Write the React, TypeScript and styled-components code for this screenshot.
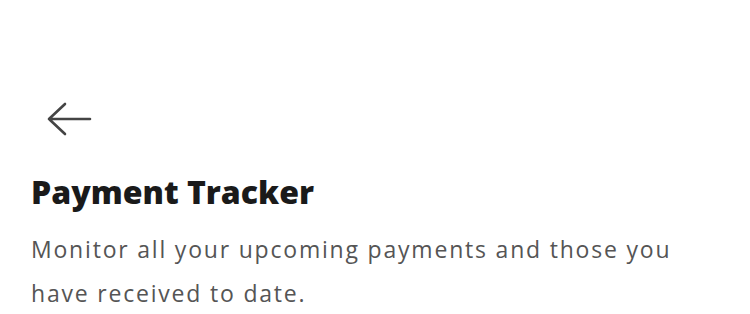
import React from 'react';
import styled, { createGlobalStyle } from 'styled-components';

const GlobalStyle = createGlobalStyle`
  html, body {
    margin: 0;
    padding: 0;
    background: #ffffff;
  }
`;

const App: React.FC = () => {
  return (
    <Page>
      <GlobalStyle />
      <BackButton aria-label="Back">
        <svg width="46" height="34" viewBox="0 0 46 34" fill="none">
          <path
            d="M44 17H3M19 2L3 17L19 32"
            stroke="#444444"
            strokeWidth="2.6"
            strokeLinecap="round"
            strokeLinejoin="round"
          />
        </svg>
      </BackButton>
      <Title>Payment Tracker</Title>
      <Description>
        Monitor all your upcoming payments and those you
        <br />
        have received to date.
      </Description>
    </Page>
  );
};

export default App;

const Page = styled.div`
  width: 750px;
  height: 314px;
  box-sizing: border-box;
  padding: 102px 0 0 31px;
  display: flex;
  flex-direction: column;
  align-items: flex-start;
  font-family: 'Open Sans', 'Noto Sans', sans-serif;
`;

const BackButton = styled.button`
  margin: 0 0 0 15px;
  padding: 0;
  border: none;
  background: none;
  display: flex;
  cursor: pointer;
`;

const Title = styled.h1`
  margin: 36px 0 0;
  font-size: 32px;
  font-weight: 800;
  line-height: 40px;
  color: #1a1a1a;
`;

const Description = styled.p`
  margin: 15px 0 0;
  font-size: 23px;
  font-weight: 400;
  letter-spacing: 1.8px;
  line-height: 44px;
  color: #555555;
`;
